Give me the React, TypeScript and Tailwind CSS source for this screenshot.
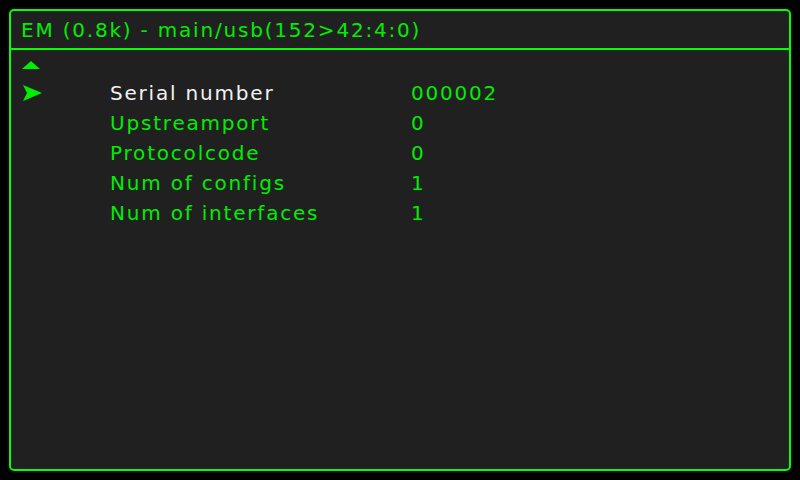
export default function App() {
  const rows = [
    { label: "Serial number", value: "000002", active: true },
    { label: "Upstreamport", value: "0" },
    { label: "Protocolcode", value: "0" },
    { label: "Num of configs", value: "1" },
    { label: "Num of interfaces", value: "1" },
  ];

  return (
    <div className="w-[800px] h-[480px] bg-black p-[9px] font-['DejaVu_Sans',sans-serif]">
      <div className="flex flex-col h-full border-2 border-[#00ff00] rounded-[5px] bg-[#202020]">
        <div className="h-[39px] border-b-2 border-[#00ff00] flex items-center pl-[10px] text-[20px] tracking-[1.8px] text-[#00ee00]">
          EM (0.8k) - main/usb(152&gt;42:4:0)
        </div>
        <div className="flex flex-col pl-[10px] pt-[9px]">
          <div className="h-[19px] flex items-start pt-[1px]">
            <svg width="20" height="10" viewBox="0 0 20 10">
              <path d="M10 1 L19 9 L1 9 Z" fill="#00ee00" />
            </svg>
          </div>
          {rows.map((r) => (
            <div key={r.label} className="h-[30px] flex items-center text-[20px] tracking-[1.8px]">
              <div className="w-[89px] flex items-center pl-[1px]">
                {r.active && (
                  <svg width="20" height="16" viewBox="0 0 20 16">
                    <path d="M1 0 L20 8 L1 16 L5 8 Z" fill="#00ee00" />
                  </svg>
                )}
              </div>
              <div className={`w-[301px] ${r.active ? "text-[#f2f2f2]" : "text-[#00ee00]"}`}>{r.label}</div>
              <div className="text-[#00ee00]">{r.value}</div>
            </div>
          ))}
        </div>
      </div>
    </div>
  );
}
